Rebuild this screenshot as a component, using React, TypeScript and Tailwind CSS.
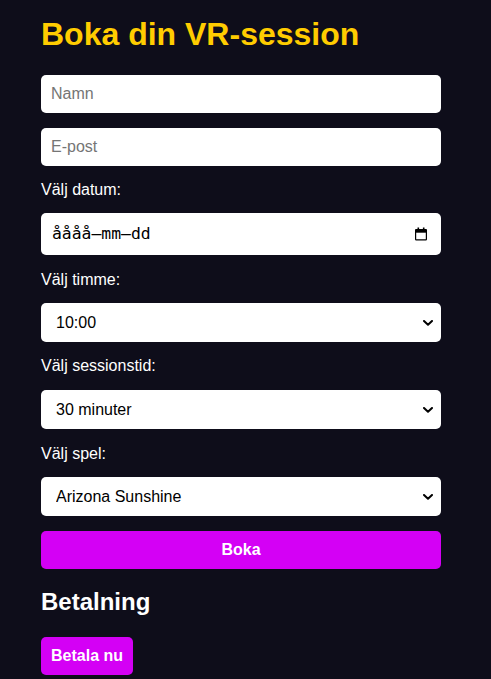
import React from "react";

function Chevron() {
  return (
    <svg
      width="10"
      height="6"
      viewBox="0 0 10 6"
      className="pointer-events-none absolute right-[8px] top-1/2 -translate-y-1/2"
    >
      <path d="M1 1 L5 4.8 L9 1" fill="none" stroke="#000" strokeWidth="2" strokeLinecap="round" strokeLinejoin="round" />
    </svg>
  );
}

function Calendar() {
  return (
    <svg width="12" height="14" viewBox="0 0 12 14">
      <rect x="2.5" y="0.5" width="1.6" height="2.5" fill="#000" />
      <rect x="7.9" y="0.5" width="1.6" height="2.5" fill="#000" />
      <rect x="0.6" y="2.5" width="10.8" height="10.4" fill="none" stroke="#000" strokeWidth="1.2" rx="0.6" />
      <rect x="0.6" y="2.5" width="10.8" height="3.2" fill="#000" />
    </svg>
  );
}

function Select({ value, options, className }: { value: string; options: string[]; className: string }) {
  return (
    <div className={"relative " + className}>
      <select
        defaultValue={value}
        className="block h-[39px] w-full appearance-none rounded-[5px] border-0 bg-white pl-[15px] pr-[24px] text-[16px] text-black outline-none font-['Liberation_Sans',Arial,sans-serif]"
      >
        {options.map((o) => (
          <option key={o}>{o}</option>
        ))}
      </select>
      <Chevron />
    </div>
  );
}

export default function App() {
  return (
    <div className="min-h-screen bg-[#0e0d1a] font-['Liberation_Sans',Arial,sans-serif]">
      <div className="ml-[41px] flex w-[400px] flex-col pt-[16px]">
        <h1 className="text-[32px] font-bold leading-[36px] text-[#ffcc00]">Boka din VR-session</h1>
        <input
          placeholder="Namn"
          className="mt-[23px] h-[38px] rounded-[5px] border-0 bg-white px-[10px] text-[16px] text-black outline-none placeholder:text-[#757575] font-['Liberation_Sans',Arial,sans-serif]"
        />
        <input
          placeholder="E-post"
          className="mt-[15px] h-[38px] rounded-[5px] border-0 bg-white px-[10px] text-[16px] text-black outline-none placeholder:text-[#757575] font-['Liberation_Sans',Arial,sans-serif]"
        />
        <label className="mt-[15px] text-[16px] leading-[18px] text-white">Välj datum:</label>
        <div className="mt-[14px] flex h-[42px] items-center justify-between rounded-[5px] bg-white pl-[11px] pr-[14px]">
          <span className="font-['DejaVu_Sans_Mono',monospace] text-[16.4px] text-black">åååå–mm–dd</span>
          <Calendar />
        </div>
        <label className="mt-[16px] text-[16px] leading-[18px] text-white">Välj timme:</label>
        <Select
          className="mt-[14px]"
          value="10:00"
          options={["10:00", "11:00", "12:00", "13:00", "14:00", "15:00", "16:00", "17:00"]}
        />
        <label className="mt-[15px] text-[16px] leading-[18px] text-white">Välj sessionstid:</label>
        <Select className="mt-[15px]" value="30 minuter" options={["30 minuter", "60 minuter", "90 minuter"]} />
        <label className="mt-[16px] text-[16px] leading-[18px] text-white">Välj spel:</label>
        <Select
          className="mt-[14px]"
          value="Arizona Sunshine"
          options={["Arizona Sunshine", "Beat Saber", "Half-Life: Alyx"]}
        />
        <button className="mt-[15px] h-[38px] rounded-[5px] bg-[#d400f5] text-[16px] font-bold text-white">
          Boka
        </button>
        <h2 className="mt-[19px] text-[24px] font-bold leading-[28px] text-white">Betalning</h2>
        <div className="mt-[21px]">
          <button className="h-[38px] rounded-[5px] bg-[#d400f5] px-[10px] text-[16px] font-bold text-white">
            Betala nu
          </button>
        </div>
      </div>
    </div>
  );
}
